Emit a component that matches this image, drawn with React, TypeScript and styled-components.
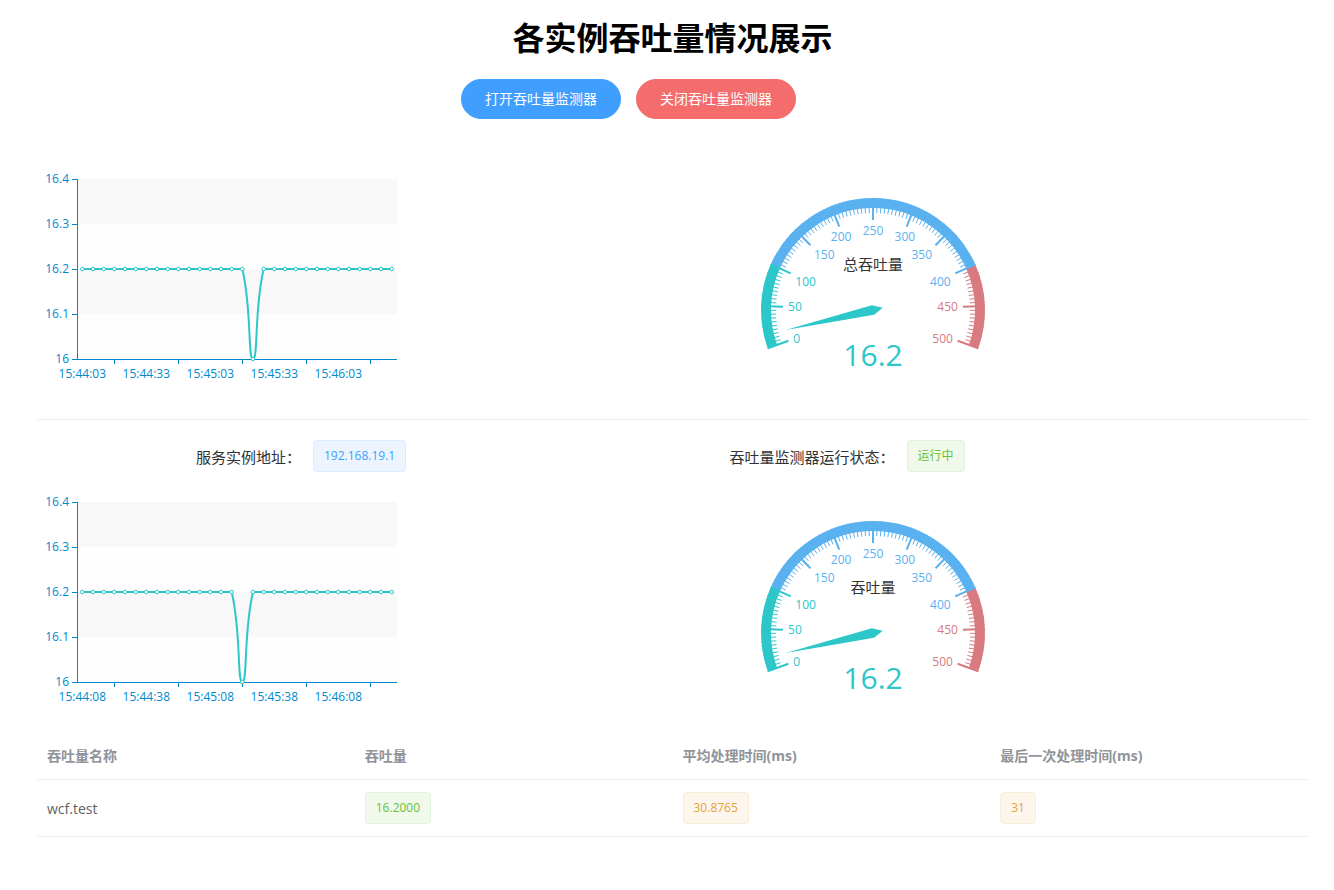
import React from 'react';
import styled, { createGlobalStyle } from 'styled-components';

const FONT = `"Open Sans", "Noto Sans CJK SC", sans-serif`;

const GlobalStyle = createGlobalStyle`
  html, body { margin: 0; padding: 0; background: #fff; }
  body { font-family: ${FONT}; }
`;

const Page = styled.div`
  width: 1334px;
  box-sizing: border-box;
  padding: 0 26px 0 37px;
`;

const Title = styled.h1`
  margin: 0;
  padding-top: 16px;
  height: 44px;
  line-height: 44px;
  text-align: center;
  font-size: 32px;
  font-weight: 700;
  color: #000;
`;

const ButtonBar = styled.div`
  margin-top: 19px;
  display: flex;
  justify-content: center;
  gap: 15px;
  padding-right: 88px;
`;

const RoundButton = styled.button<{ $tone: 'primary' | 'danger' }>`
  padding: 12px 23px;
  border-radius: 20px;
  font-family: ${FONT};
  font-size: 14px;
  line-height: 14px;
  color: #fff;
  cursor: pointer;
  border: 1px solid ${(p) => (p.$tone === 'primary' ? '#409eff' : '#f56c6c')};
  background: ${(p) => (p.$tone === 'primary' ? '#409eff' : '#f56c6c')};
`;

const ChartRow = styled.div<{ $h: number }>`
  display: grid;
  grid-template-columns: 1fr 1fr;
  height: ${(p) => p.$h}px;
`;

const Cell = styled.div`
  display: flex;
  align-items: flex-start;
`;

const Divider = styled.div`
  height: 1px;
  background: #ebebeb;
`;

const InfoRow = styled.div`
  margin-top: 20px;
  display: grid;
  grid-template-columns: 1fr 1fr;
  height: 32px;
`;

const InfoItem = styled.div`
  display: flex;
  align-items: center;
`;

const InfoLabel = styled.span<{ $w: number }>`
  width: ${(p) => p.$w}px;
  box-sizing: border-box;
  padding-right: 12px;
  text-align: right;
  font-size: 15px;
  color: #303133;
  white-space: nowrap;
`;

const tagColors = {
  primary: { bg: '#ecf5ff', bd: '#d9ecff', fg: '#409eff' },
  success: { bg: '#f0f9eb', bd: '#e1f3d8', fg: '#67c23a' },
  warning: { bg: '#fdf6ec', bd: '#faecd8', fg: '#e6a23c' },
};

const Tag = styled.span<{ $type: keyof typeof tagColors }>`
  display: inline-block;
  height: 32px;
  line-height: 30px;
  padding: 0 10px;
  box-sizing: border-box;
  font-size: 12px;
  border-radius: 4px;
  white-space: nowrap;
  vertical-align: middle;
  background: ${(p) => tagColors[p.$type].bg};
  border: 1px solid ${(p) => tagColors[p.$type].bd};
  color: ${(p) => tagColors[p.$type].fg};
`;

const Table = styled.table`
  width: 100%;
  border-collapse: collapse;
  table-layout: fixed;
  font-size: 14px;
`;

const Th = styled.th`
  padding: 12px 0;
  text-align: left;
  font-weight: 700;
  color: #909399;
  border-bottom: 1px solid #ebeef5;
`;

const Td = styled.td`
  padding: 12px 0;
  text-align: left;
  color: #606266;
  border-bottom: 1px solid #ebeef5;
`;

const CellInner = styled.div`
  padding: 0 10px;
  line-height: 23px;
  min-height: 23px;
  display: flex;
  align-items: center;
`;

const ChartSvg = styled.svg`
  display: block;
  font-family: ${FONT};
`;

/* ---------- line chart ---------- */

type Pt = [number, number];

function smoothPath(pts: Pt[], smooth: number): string {
  const xs = pts.map((p) => p[0]);
  const ys = pts.map((p) => p[1]);
  const min: Pt = [Math.min(...xs), Math.min(...ys)];
  const max: Pt = [Math.max(...xs), Math.max(...ys)];
  const cps: Pt[] = [];
  const len = pts.length;
  for (let i = 0; i < len; i++) {
    const p = pts[i];
    if (i === 0 || i === len - 1) {
      cps.push([p[0], p[1]]);
      continue;
    }
    const prev = pts[i - 1];
    const next = pts[i + 1];
    const v: Pt = [(next[0] - prev[0]) * smooth, (next[1] - prev[1]) * smooth];
    let d0 = Math.hypot(p[0] - prev[0], p[1] - prev[1]);
    let d1 = Math.hypot(p[0] - next[0], p[1] - next[1]);
    const sum = d0 + d1;
    if (sum !== 0) {
      d0 /= sum;
      d1 /= sum;
    }
    const clamp = (q: Pt): Pt => [
      Math.min(max[0], Math.max(min[0], q[0])),
      Math.min(max[1], Math.max(min[1], q[1])),
    ];
    cps.push(clamp([p[0] - v[0] * d0, p[1] - v[1] * d0]));
    cps.push(clamp([p[0] + v[0] * d1, p[1] + v[1] * d1]));
  }
  let d = `M${pts[0][0]} ${pts[0][1]}`;
  let idx = 0;
  for (let i = 1; i < len; i++) {
    const a = cps[idx++];
    const b = cps[idx++];
    d += ` C${a[0]} ${a[1]} ${b[0]} ${b[1]} ${pts[i][0]} ${pts[i][1]}`;
  }
  return d;
}

const AXIS = '#008acd';
const TEAL = '#2ec7c9';

const LineChart: React.FC<{ height: number; gridTop: number; times: string[]; dip: number }> = ({
  height,
  gridTop,
  times,
  dip,
}) => {
  const left = 40;
  const right = 360;
  const gridH = 180;
  const top = gridTop;
  const bottom = gridTop + gridH;
  const n = 30;
  const bw = (right - left) / n;
  const yOf = (v: number) => bottom - ((v - 16) / 0.4) * gridH;
  const pts: Pt[] = Array.from({ length: n }, (_, i) => [left + bw * (i + 0.5), yOf(i === dip ? 16 : 16.2)]);
  const yVals = [16, 16.1, 16.2, 16.3, 16.4];
  const yLabels = ['16', '16.1', '16.2', '16.3', '16.4'];
  const bandH = gridH / 4;
  return (
    <ChartSvg width={400} height={height} viewBox={`0 0 400 ${height}`}>
      {[0, 1, 2, 3].map((k) => (
        <rect
          key={k}
          x={left}
          y={bottom - bandH * (k + 1)}
          width={right - left}
          height={bandH}
          fill={k % 2 === 0 ? '#fefefe' : '#f8f8f8'}
        />
      ))}
      <line x1={left + 0.5} y1={top} x2={left + 0.5} y2={bottom} stroke={AXIS} strokeWidth={1} />
      <line x1={left} y1={bottom + 0.5} x2={right} y2={bottom + 0.5} stroke={AXIS} strokeWidth={1} />
      {yVals.map((v, i) => (
        <g key={v}>
          <line x1={left - 5} y1={Math.round(yOf(v)) + 0.5} x2={left} y2={Math.round(yOf(v)) + 0.5} stroke={AXIS} />
          <text x={left - 8} y={yOf(v) + 4.3} textAnchor="end" fontSize={12} fill={AXIS}>
            {yLabels[i]}
          </text>
        </g>
      ))}
      {[0, 1, 2, 3, 4].map((k) => {
        const tx = Math.round(left + bw * (3.5 + 6 * k)) + 0.5;
        const lx = left + bw * (0.5 + 6 * k);
        return (
          <g key={k}>
            <line x1={tx} y1={bottom} x2={tx} y2={bottom + 5} stroke={AXIS} />
            <text x={lx} y={bottom + 18.5} textAnchor="middle" fontSize={12} fill={AXIS}>
              {times[k]}
            </text>
          </g>
        );
      })}
      <path d={smoothPath(pts, 0.5)} fill="none" stroke={TEAL} strokeWidth={2} />
      {pts.map((p, i) => (
        <circle key={i} cx={p[0]} cy={p[1]} r={1.8} fill="#fff" stroke={TEAL} strokeWidth={1} />
      ))}
    </ChartSvg>
  );
};

/* ---------- gauge ---------- */

const gaugeColors: [number, string][] = [
  [0.2, '#2ec7c9'],
  [0.8, '#5ab1ef'],
  [1, '#d87a80'],
];
const colorAt = (p: number) => (gaugeColors.find((c) => p <= c[0] + 1e-9) || gaugeColors[2])[1];

const Gauge: React.FC<{ height: number; cy: number; title: string; value: number }> = ({
  height,
  cy,
  title,
  value,
}) => {
  const cx = 200;
  const r = 112;
  const start = 200;
  const span = 220;
  const rad = (d: number) => (d * Math.PI) / 180;
  const pt = (deg: number, rr: number): Pt => [cx + rr * Math.cos(rad(deg)), cy - rr * Math.sin(rad(deg))];
  const arc = (a1: number, a2: number, rr: number) => {
    const [x1, y1] = pt(a1, rr);
    const [x2, y2] = pt(a2, rr);
    return `M${x1} ${y1} A${rr} ${rr} 0 ${a1 - a2 > 180 ? 1 : 0} 1 ${x2} ${y2}`;
  };
  let prev = 0;
  const bands = gaugeColors.map(([p, c]) => {
    const d = arc(start - span * prev, start - span * p, r - 5);
    prev = p;
    return <path key={c} d={d} fill="none" stroke={c} strokeWidth={10} />;
  });
  const ticks = Array.from({ length: 101 }, (_, i) => {
    const p = i / 100;
    const a = start - span * p;
    const [x1, y1] = pt(a, r);
    const [x2, y2] = pt(a, r - 15);
    return <line key={i} x1={x1} y1={y1} x2={x2} y2={y2} stroke={colorAt(p)} strokeWidth={1} />;
  });
  const splits = Array.from({ length: 11 }, (_, i) => {
    const p = i / 10;
    const a = start - span * p;
    const [x1, y1] = pt(a, r);
    const [x2, y2] = pt(a, r - 22);
    const ux = Math.cos(rad(a));
    const uy = -Math.sin(rad(a));
    const [lx, ly] = pt(a, r - 27);
    const anchor = ux < -0.4 ? 'start' : ux > 0.4 ? 'end' : 'middle';
    const by = uy < -0.4 ? ly + 10.3 : uy > 0.4 ? ly - 2 : ly + 4.3;
    return (
      <g key={i}>
        <line x1={x1} y1={y1} x2={x2} y2={y2} stroke={colorAt(p)} strokeWidth={2} />
        <text x={lx} y={by} textAnchor={anchor} fontSize={12} fill={colorAt(p)}>
          {i * 50}
        </text>
      </g>
    );
  });
  const pct = value / 500;
  const ang = rad(start - span * pct);
  const dir: Pt = [Math.cos(ang), -Math.sin(ang)];
  const perp: Pt = [-dir[1], dir[0]];
  const w = 5;
  const L = r * 0.8;
  const needle = [
    [cx - dir[0] * w * 2, cy - dir[1] * w * 2],
    [cx + perp[0] * w, cy + perp[1] * w],
    [cx + dir[0] * L, cy + dir[1] * L],
    [cx - perp[0] * w, cy - perp[1] * w],
  ]
    .map((q) => q.join(','))
    .join(' ');
  return (
    <ChartSvg width={400} height={height} viewBox={`0 0 400 ${height}`}>
      {bands}
      {ticks}
      {splits}
      <text x={cx} y={cy - r * 0.4 + 5} textAnchor="middle" fontSize={15} fill="#333">
        {title}
      </text>
      <polygon points={needle} fill={colorAt(pct)} />
      <text x={cx} y={cy + r * 0.4 + 11.5} textAnchor="middle" fontSize={30} fill={colorAt(pct)}>
        {value}
      </text>
    </ChartSvg>
  );
};

/* ---------- page ---------- */

const rows = [{ name: 'wcf.test', tput: '16.2000', avg: '30.8765', last: '31' }];

export default function App() {
  return (
    <>
      <GlobalStyle />
      <Page>
        <Title>各实例吞吐量情况展示</Title>
        <ButtonBar>
          <RoundButton $tone="primary">打开吞吐量监测器</RoundButton>
          <RoundButton $tone="danger">关闭吞吐量监测器</RoundButton>
        </ButtonBar>
        <ChartRow $h={300}>
          <Cell>
            <LineChart
              height={300}
              gridTop={60}
              dip={16}
              times={['15:44:03', '15:44:33', '15:45:03', '15:45:33', '15:46:03']}
            />
          </Cell>
          <Cell>
            <Gauge height={300} cy={191} title="总吞吐量" value={16.2} />
          </Cell>
        </ChartRow>
        <Divider />
        <InfoRow>
          <InfoItem>
            <InfoLabel $w={276}>服务实例地址：</InfoLabel>
            <Tag $type="primary">192.168.19.1</Tag>
          </InfoItem>
          <InfoItem>
            <InfoLabel $w={234}>吞吐量监测器运行状态：</InfoLabel>
            <Tag $type="success">运行中</Tag>
          </InfoItem>
        </InfoRow>
        <ChartRow $h={260}>
          <Cell>
            <LineChart
              height={260}
              gridTop={30}
              dip={15}
              times={['15:44:08', '15:44:38', '15:45:08', '15:45:38', '15:46:08']}
            />
          </Cell>
          <Cell>
            <Gauge height={260} cy={161} title="吞吐量" value={16.2} />
          </Cell>
        </ChartRow>
        <Table>
          <thead>
            <tr>
              <Th>
                <CellInner>吞吐量名称</CellInner>
              </Th>
              <Th>
                <CellInner>吞吐量</CellInner>
              </Th>
              <Th>
                <CellInner>平均处理时间(ms)</CellInner>
              </Th>
              <Th>
                <CellInner>最后一次处理时间(ms)</CellInner>
              </Th>
            </tr>
          </thead>
          <tbody>
            {rows.map((r) => (
              <tr key={r.name}>
                <Td>
                  <CellInner>{r.name}</CellInner>
                </Td>
                <Td>
                  <CellInner>
                    <Tag $type="success">{r.tput}</Tag>
                  </CellInner>
                </Td>
                <Td>
                  <CellInner>
                    <Tag $type="warning">{r.avg}</Tag>
                  </CellInner>
                </Td>
                <Td>
                  <CellInner>
                    <Tag $type="warning">{r.last}</Tag>
                  </CellInner>
                </Td>
              </tr>
            ))}
          </tbody>
        </Table>
      </Page>
    </>
  );
}
